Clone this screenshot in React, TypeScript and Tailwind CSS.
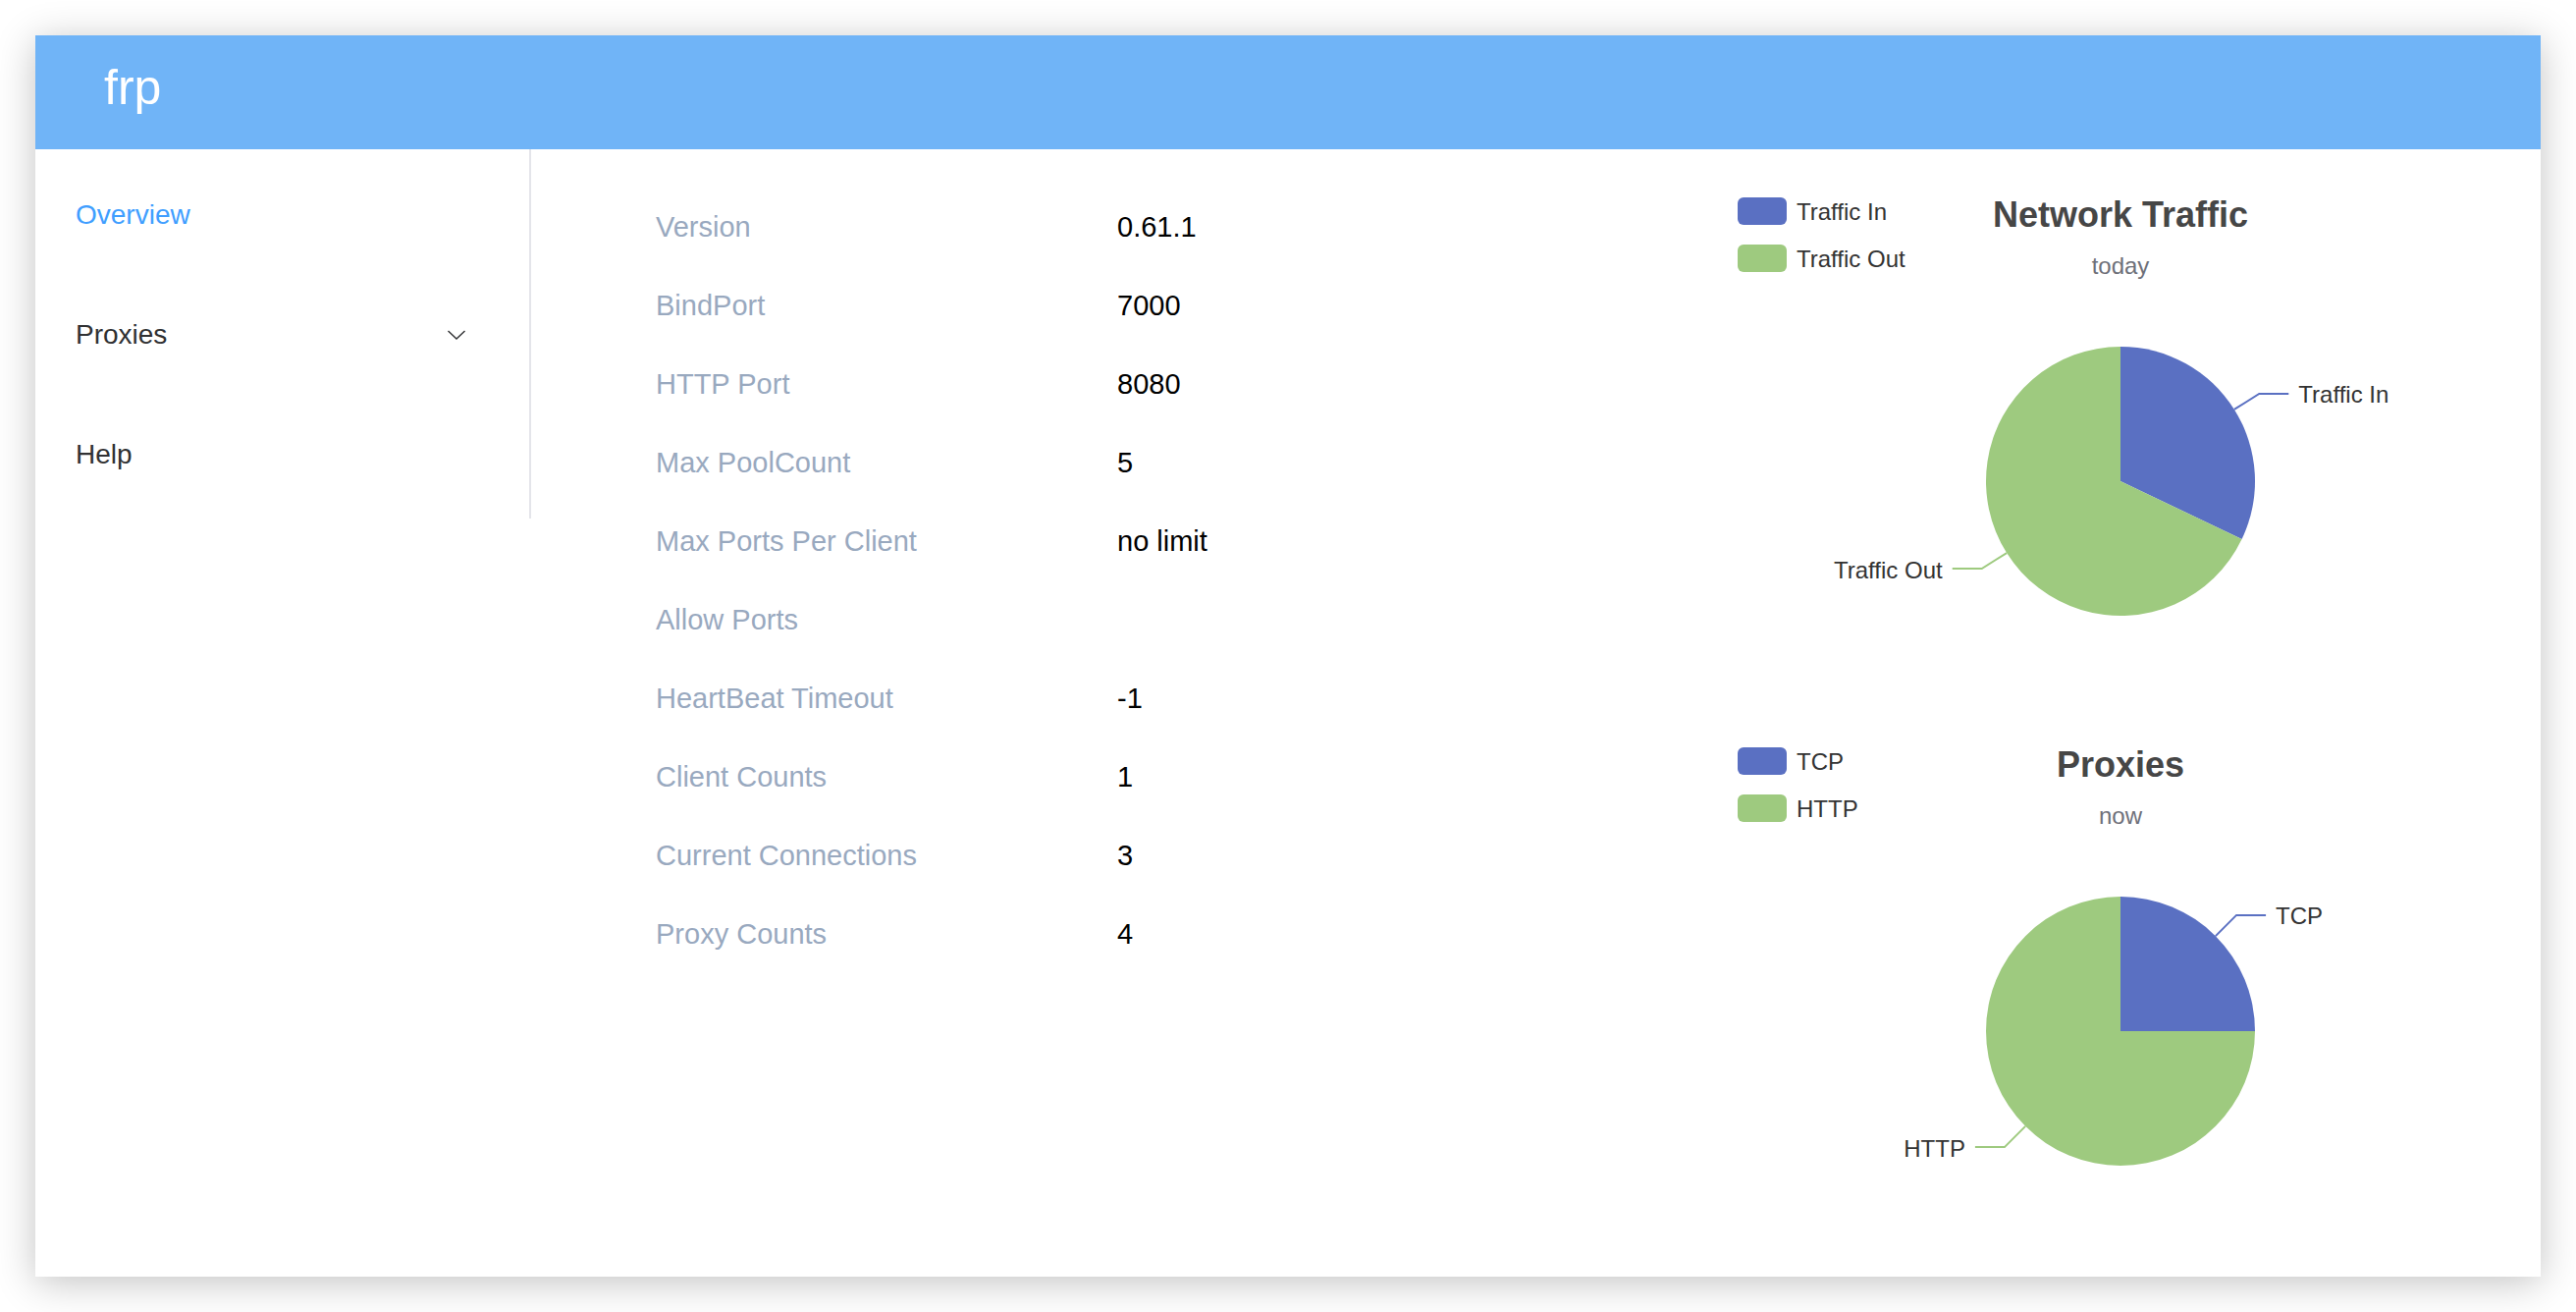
const serverInfo = [
  { label: "Version", value: "0.61.1" },
  { label: "BindPort", value: "7000" },
  { label: "HTTP Port", value: "8080" },
  { label: "Max PoolCount", value: "5" },
  { label: "Max Ports Per Client", value: "no limit" },
  { label: "Allow Ports", value: "" },
  { label: "HeartBeat Timeout", value: "-1" },
  { label: "Client Counts", value: "1" },
  { label: "Current Connections", value: "3" },
  { label: "Proxy Counts", value: "4" },
];

const BLUE = "#5a70c2";
const GREEN = "#9eca7f";

type Slice = { name: string; value: number; color: string };

// chart canvas is 800x560, pie centred at (400, 299)
const CX = 400;
const CY = 299;
const R = 137;

const point = (deg: number, r: number) => {
  const a = (deg * Math.PI) / 180;
  return [CX + r * Math.sin(a), CY - r * Math.cos(a)];
};

function PieChart({
  title,
  subtext,
  data,
}: {
  title: string;
  subtext: string;
  data: Slice[];
}) {
  const total = data.reduce((s, d) => s + d.value, 0);
  let start = 0;
  const slices = data.map((d) => {
    const sweep = (d.value / total) * 360;
    const from = start;
    start += sweep;
    return { ...d, from, to: start, mid: from + sweep / 2, sweep };
  });

  return (
    <div className="relative w-[800px] h-[560px]">
      <svg width="800" height="560" className="block" style={{ fontFamily: "'Liberation Sans', Arial, sans-serif" }}>
        {/* legend */}
        {slices.map((s, i) => (
          <g key={s.name}>
            <rect x="10" y={10 + i * 48} width="50" height="28" rx="6" fill={s.color} />
            <text x="70" y={24 + i * 48} dominantBaseline="central" fontSize="24" fill="#333">
              {s.name}
            </text>
          </g>
        ))}

        {/* title */}
        <text x={CX} y="27" textAnchor="middle" dominantBaseline="central" fontSize="36" fontWeight="bold" fill="#464646">
          {title}
        </text>
        <text x={CX} y="79" textAnchor="middle" dominantBaseline="central" fontSize="24" fill="#6e7079">
          {subtext}
        </text>

        {/* slices */}
        {slices.map((s) => {
          const [x0, y0] = point(s.from, R);
          const [x1, y1] = point(s.to, R);
          const large = s.sweep > 180 ? 1 : 0;
          return (
            <path
              key={s.name}
              d={`M${CX} ${CY} L${x0} ${y0} A${R} ${R} 0 ${large} 1 ${x1} ${y1} Z`}
              fill={s.color}
            />
          );
        })}

        {/* label lines */}
        {slices.map((s) => {
          const [ax, ay] = point(s.mid, R);
          const [bx, by] = point(s.mid, R + 30);
          const right = bx >= CX;
          const cx2 = right ? bx + 30 : bx - 30;
          return (
            <g key={s.name + "-label"}>
              <polyline
                points={`${ax},${ay} ${bx},${by} ${cx2},${by}`}
                fill="none"
                stroke={s.color}
                strokeWidth="2"
              />
              <text
                x={right ? cx2 + 10 : cx2 - 10}
                y={by + 1}
                textAnchor={right ? "start" : "end"}
                dominantBaseline="central"
                fontSize="24"
                fill="#333"
              >
                {s.name}
              </text>
            </g>
          );
        })}
      </svg>
    </div>
  );
}

function Chevron() {
  return (
    <svg width="20" height="12" viewBox="0 0 20 12" fill="none">
      <polyline points="1.5,2 10,10 18.5,2" stroke="#303133" strokeWidth="1.4" />
    </svg>
  );
}

export default function App() {
  return (
    <div
      className="w-full h-[1336px] bg-white p-[36px]"
      style={{ fontFamily: "'Liberation Sans', Arial, Helvetica, sans-serif" }}
    >
      <div className="w-[2552px] h-[1264px] bg-white shadow-[0_6px_38px_rgba(0,0,0,0.24)] flex flex-col">
        {/* Header */}
        <header className="h-[116px] shrink-0 bg-[#70b4f7] flex items-center pl-[70px] pb-[10px]">
          <span className="text-[50px] leading-none text-white">frp</span>
        </header>

        <div className="flex flex-1 items-start">
          {/* Sidebar */}
          <nav className="w-[505px] shrink-0 border-r-2 border-[#e4e5ea] pt-[6px] pb-[4px]">
            <div className="h-[122px] flex items-center pl-[41px] text-[28px] text-[#409eff]">
              Overview
            </div>
            <div className="h-[122px] flex items-center justify-between pl-[41px] pr-[64px] text-[28px] text-[#303133]">
              <span>Proxies</span>
              <Chevron />
            </div>
            <div className="h-[122px] flex items-center pl-[41px] text-[28px] text-[#303133]">
              Help
            </div>
          </nav>

          {/* Main */}
          <main className="flex-1 flex pt-[40px]">
            <div className="pl-[127px] w-[1219px]">
              {serverInfo.map((row) => (
                <div key={row.label} className="h-[80px] flex items-center text-[29px]">
                  <span className="w-[470px] text-[#99a9bf]">{row.label}</span>
                  <span className="text-black">{row.value}</span>
                </div>
              ))}
            </div>

            <div className="flex flex-col -mt-[1px]">
              <PieChart
                title="Network Traffic"
                subtext="today"
                data={[
                  { name: "Traffic In", value: 32.1, color: BLUE },
                  { name: "Traffic Out", value: 67.9, color: GREEN },
                ]}
              />
              <PieChart
                title="Proxies"
                subtext="now"
                data={[
                  { name: "TCP", value: 1, color: BLUE },
                  { name: "HTTP", value: 3, color: GREEN },
                ]}
              />
            </div>
          </main>
        </div>
      </div>
    </div>
  );
}
